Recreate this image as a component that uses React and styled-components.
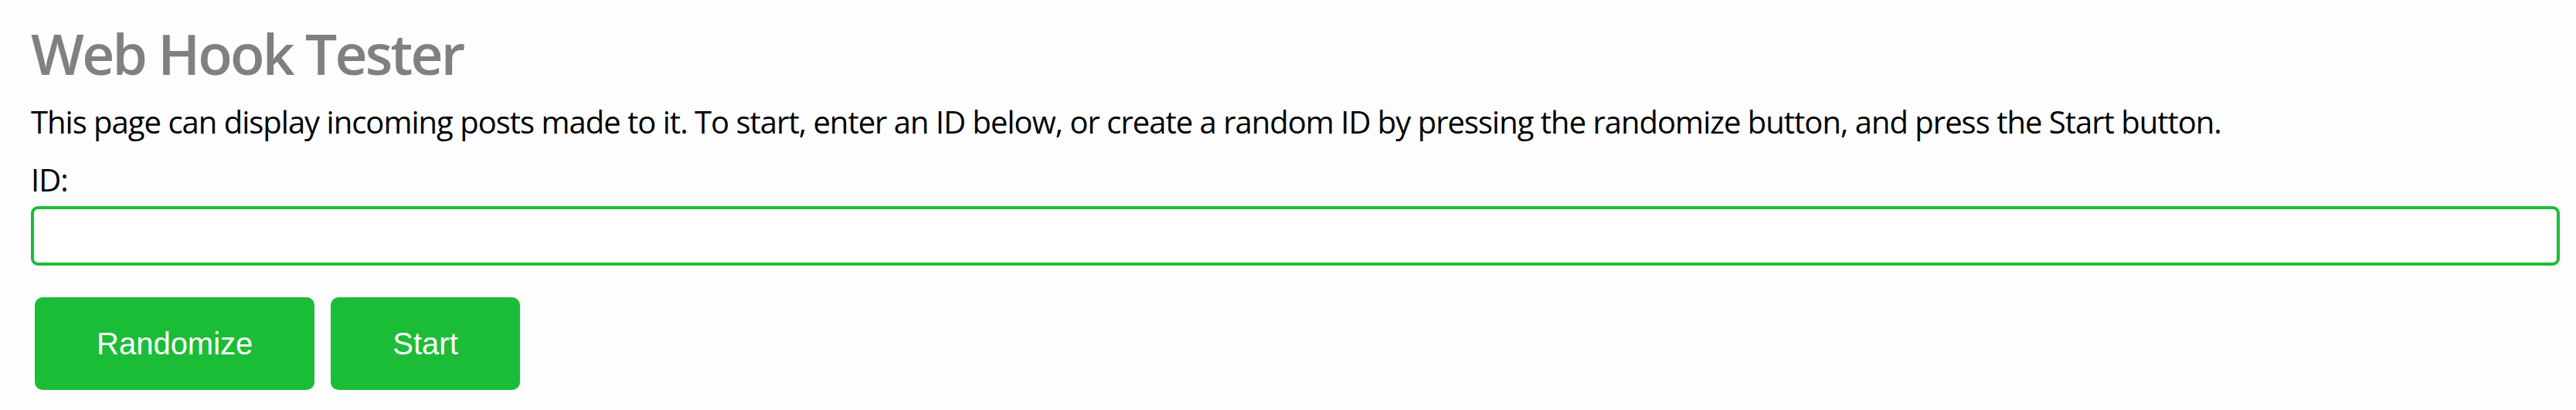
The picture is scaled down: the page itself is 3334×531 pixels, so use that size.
import React from "react";
import styled, { createGlobalStyle } from "styled-components";

const GREEN = "#1bbd37";

const Global = createGlobalStyle`
  html, body {
    margin: 0;
    padding: 0;
    background: #fdfdfd;
  }
  * { box-sizing: border-box; }
`;

const Page = styled.main`
  display: flex;
  flex-direction: column;
  padding: 32px 21px 0 40px;
  font-family: "Open Sans", "Noto Sans", sans-serif;
  color: #000;
`;

const Title = styled.h1`
  margin: 0;
  font-size: 73px;
  line-height: 73px;
  font-weight: 600;
  color: #808080;
  letter-spacing: -2.8px;
`;

const Intro = styled.p`
  margin: 28.5px 0 0;
  font-size: 40px;
  line-height: 48px;
  font-weight: 400;
  letter-spacing: -1px;
  white-space: nowrap;
`;

const Label = styled.label`
  display: block;
  margin-top: 27px;
  font-size: 40px;
  line-height: 48px;
  letter-spacing: -1px;
`;

const IdInput = styled.input`
  display: block;
  margin-top: 10.5px;
  width: 100%;
  height: 77px;
  border: 4px solid ${GREEN};
  border-radius: 9px;
  background: #fff;
  outline: none;
  font-size: 40px;
  padding: 0 12px;
`;

const Actions = styled.div`
  display: flex;
  gap: 21px;
  margin-top: 41px;
  padding-left: 5px;
`;

const Button = styled.button`
  height: 120px;
  padding: 0 80px;
  border: none;
  border-radius: 10px;
  background: ${GREEN};
  color: #fff;
  font-family: "Liberation Sans", Arial, sans-serif;
  font-size: 40px;
  cursor: pointer;
`;

export default function App() {
  return (
    <>
      <Global />
      <Page>
        <Title>Web Hook Tester</Title>
        <Intro>
          This page can display incoming posts made to it. To start, enter an ID below, or create a random ID by pressing the randomize button, and press the Start button.
        </Intro>
        <Label htmlFor="hook-id">ID:</Label>
        <IdInput id="hook-id" type="text" />
        <Actions>
          <Button type="button">Randomize</Button>
          <Button type="button">Start</Button>
        </Actions>
      </Page>
    </>
  );
}
